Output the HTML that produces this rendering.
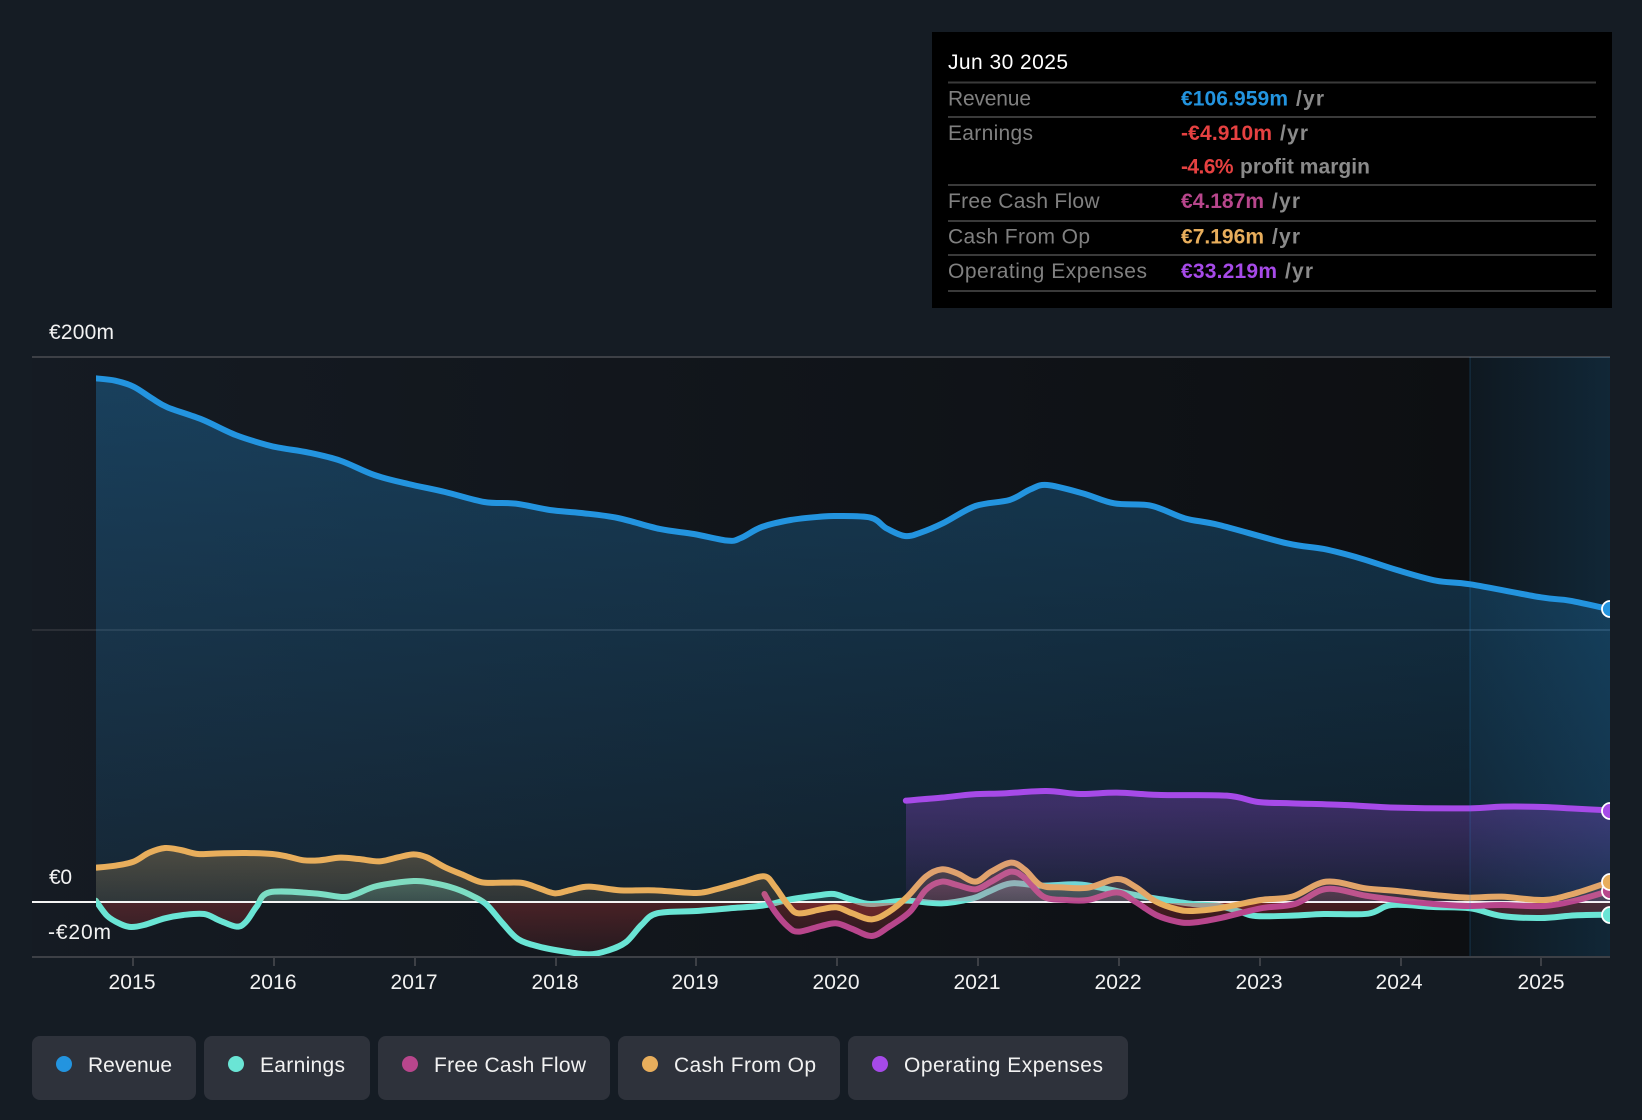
<!DOCTYPE html>
<html lang="en">
<head>
<meta charset="utf-8">
<title>Revenue and earnings chart</title>
<style>
html,body{margin:0;padding:0;background:#151c24;width:1642px;height:1120px;overflow:hidden}
svg{display:block}
text{font-family:"Liberation Sans",Arial,sans-serif;font-size:21px;fill:#f2f2f2}
.l{fill:#808080}
.b{font-weight:bold}
.g{fill:#8a8a8a;font-weight:bold}
.ln{fill:none;stroke-linecap:round;stroke-linejoin:round;vector-effect:non-scaling-stroke}
</style>
</head>
<body>
<svg id="chart" width="1642" height="1120" viewBox="0 0 1642 1120" xmlns="http://www.w3.org/2000/svg">
<defs>
<linearGradient id="bg" gradientUnits="userSpaceOnUse" x1="32" y1="0" x2="1470" y2="0"><stop offset="0" stop-color="#151b23"/><stop offset="1" stop-color="#0d0f12"/></linearGradient>
<linearGradient id="band" gradientUnits="userSpaceOnUse" x1="1470" y1="0" x2="1610" y2="0"><stop offset="0" stop-color="#2394df" stop-opacity=".07"/><stop offset="1" stop-color="#2394df" stop-opacity=".18"/></linearGradient>
<linearGradient id="rev" gradientUnits="userSpaceOnUse" x1="0" y1="375" x2="0" y2="902"><stop offset="0" stop-color="#2394df" stop-opacity=".31"/><stop offset="1" stop-color="#2394df" stop-opacity=".1"/></linearGradient>
<linearGradient id="org" gradientUnits="userSpaceOnUse" x1="0" y1="845" x2="0" y2="902"><stop offset="0" stop-color="#e8ae5c" stop-opacity=".27"/><stop offset="1" stop-color="#e8ae5c" stop-opacity=".12"/></linearGradient>
<linearGradient id="tea" gradientUnits="userSpaceOnUse" x1="0" y1="870" x2="0" y2="902"><stop offset="0" stop-color="#6ae5d5" stop-opacity=".3"/><stop offset="1" stop-color="#6ae5d5" stop-opacity=".15"/></linearGradient>
<linearGradient id="pnk" gradientUnits="userSpaceOnUse" x1="0" y1="860" x2="0" y2="902"><stop offset="0" stop-color="#b8468c" stop-opacity=".3"/><stop offset="1" stop-color="#b8468c" stop-opacity=".15"/></linearGradient>
<linearGradient id="red" gradientUnits="userSpaceOnUse" x1="0" y1="902" x2="0" y2="957"><stop offset="0" stop-color="#e64141" stop-opacity=".26"/><stop offset="1" stop-color="#e64141" stop-opacity=".08"/></linearGradient>
<linearGradient id="opx" gradientUnits="userSpaceOnUse" x1="0" y1="805" x2="0" y2="902"><stop offset="0" stop-color="#a64ae8" stop-opacity=".28"/><stop offset="1" stop-color="#a64ae8" stop-opacity=".06"/></linearGradient>
<clipPath id="plot"><rect x="96" y="340" width="1514" height="620"/></clipPath>
<clipPath id="cRev"><polygon transform="translate(0,310) scale(.5236,.33333)" points="183,1776 183,205 220,212 255,230 290,265 320,292 385,328 450,375 510,405 540,415 590,428 650,452 715,495 780,522 850,546 925,576 985,581 1050,600 1110,609 1180,624 1260,657 1325,672 1390,692 1415,684 1455,651 1510,630 1568,620 1598,618 1663,623 1693,655 1728,678 1758,668 1803,638 1863,588 1928,570 1968,538 2000,525 2068,550 2128,580 2198,587 2263,625 2328,645 2458,700 2528,717 2598,745 2668,780 2743,812 2808,823 2943,862 2998,872 3075,898 3075,1776"/></clipPath>
<clipPath id="cEar"><polygon transform="translate(0,780) scale(.5236,.33333)" points="183,367 183,362 205,408 230,432 250,441 275,435 315,415 350,405 390,402 420,422 452,440 470,425 490,380 515,337 600,340 655,351 680,342 720,318 790,303 830,310 870,326 905,350 930,375 960,430 990,478 1030,500 1080,515 1125,523 1160,512 1195,487 1225,435 1255,400 1330,393 1400,384 1460,376 1510,358 1568,345 1593,342 1623,357 1663,372 1728,362 1798,370 1858,355 1888,335 1931,310 1988,317 2058,313 2108,325 2168,345 2218,358 2278,372 2328,378 2368,395 2398,408 2468,407 2528,402 2613,401 2658,375 2738,381 2808,385 2868,408 2943,414 3008,406 3075,404 3075,367"/></clipPath>
<clipPath id="cFcf"><polygon transform="translate(0,780) scale(.5236,.33333)" points="1460,367 1460,342 1480,395 1505,440 1525,455 1568,438 1598,430 1628,447 1665,468 1698,440 1738,395 1768,330 1798,305 1828,315 1863,328 1893,305 1931,275 1958,295 1993,350 2038,360 2078,360 2133,337 2168,365 2208,405 2248,425 2278,428 2328,415 2408,385 2473,372 2533,327 2608,347 2668,360 2738,372 2803,378 2868,375 2948,378 3008,362 3075,332 3075,367"/></clipPath>
<clipPath id="cCash"><polygon transform="translate(0,780) scale(.5236,.33333)" points="183,367 183,263 220,257 255,245 285,218 315,204 345,210 378,222 420,220 470,219 520,222 550,230 580,241 610,241 650,233 685,237 725,244 760,232 790,223 815,232 850,262 885,285 920,307 960,308 998,309 1030,325 1060,340 1090,330 1125,320 1185,331 1250,331 1330,339 1370,327 1420,305 1460,289 1480,320 1505,375 1525,400 1568,388 1598,382 1628,400 1665,418 1698,395 1733,350 1768,290 1798,268 1828,280 1863,305 1893,275 1931,248 1958,270 1988,316 2028,322 2078,323 2133,297 2168,320 2208,365 2248,388 2278,393 2328,385 2408,360 2468,350 2533,305 2608,325 2668,333 2738,345 2803,353 2868,350 2948,360 3008,340 3075,305 3075,367"/></clipPath>
<clipPath id="cOpx"><polygon transform="translate(0,780) scale(.5236,.33333)" points="1730,367 1730,62 1798,53 1858,43 1918,40 1998,33 2063,42 2133,38 2218,45 2343,47 2403,66 2468,70 2568,75 2668,83 2808,85 2868,80 2948,81 3008,86 3075,91 3075,367"/></clipPath>
</defs>

<rect width="1642" height="1120" fill="#151c24"/>
<rect x="32" y="357" width="1578" height="600" fill="url(#bg)"/>

<!-- grid -->
<rect x="32" y="356" width="1578" height="2" fill="#3d4046"/>
<rect x="32" y="629" width="1578" height="2" fill="#2b2f36"/>

<!-- revenue fill -->
<rect x="96" y="360" width="1514" height="542" fill="url(#rev)" clip-path="url(#cRev)"/>
<!-- forecast band -->
<rect x="1470" y="357" width="140" height="600" fill="url(#band)"/>

<g clip-path="url(#plot)">
<polyline transform="translate(0,310) scale(.5236,.33333)" class="ln" stroke="#2394df" stroke-width="6" points="183,205 220,212 255,230 290,265 320,292 385,328 450,375 510,405 540,415 590,428 650,452 715,495 780,522 850,546 925,576 985,581 1050,600 1110,609 1180,624 1260,657 1325,672 1390,692 1415,684 1455,651 1510,630 1568,620 1598,618 1663,623 1693,655 1728,678 1758,668 1803,638 1863,588 1928,570 1968,538 2000,525 2068,550 2128,580 2198,587 2263,625 2328,645 2458,700 2528,717 2598,745 2668,780 2743,812 2808,823 2943,862 2998,872 3075,898"/>

<rect x="32" y="901" width="1578" height="2" fill="#f4f4f4"/>

<!-- earnings -->
<rect x="96" y="700" width="1514" height="201" fill="url(#tea)" clip-path="url(#cEar)"/>
<rect x="96" y="903" width="1514" height="54" fill="url(#red)" clip-path="url(#cEar)"/>
<polyline transform="translate(0,780) scale(.5236,.33333)" class="ln" stroke="#6ae5d5" stroke-width="6" points="183,362 205,408 230,432 250,441 275,435 315,415 350,405 390,402 420,422 452,440 470,425 490,380 515,337 600,340 655,351 680,342 720,318 790,303 830,310 870,326 905,350 930,375 960,430 990,478 1030,500 1080,515 1125,523 1160,512 1195,487 1225,435 1255,400 1330,393 1400,384 1460,376 1510,358 1568,345 1593,342 1623,357 1663,372 1728,362 1798,370 1858,355 1888,335 1931,310 1988,317 2058,313 2108,325 2168,345 2218,358 2278,372 2328,378 2368,395 2398,408 2468,407 2528,402 2613,401 2658,375 2738,381 2808,385 2868,408 2943,414 3008,406 3075,404"/>

<!-- free cash flow -->
<rect x="96" y="700" width="1514" height="201" fill="url(#pnk)" clip-path="url(#cFcf)"/>
<rect x="96" y="903" width="1514" height="54" fill="url(#red)" clip-path="url(#cFcf)"/>
<polyline transform="translate(0,780) scale(.5236,.33333)" class="ln" stroke="#b8468c" stroke-width="6" points="1460,342 1480,395 1505,440 1525,455 1568,438 1598,430 1628,447 1665,468 1698,440 1738,395 1768,330 1798,305 1828,315 1863,328 1893,305 1931,275 1958,295 1993,350 2038,360 2078,360 2133,337 2168,365 2208,405 2248,425 2278,428 2328,415 2408,385 2473,372 2533,327 2608,347 2668,360 2738,372 2803,378 2868,375 2948,378 3008,362 3075,332"/>

<!-- cash from op -->
<rect x="96" y="700" width="1514" height="201" fill="url(#org)" clip-path="url(#cCash)"/>
<rect x="96" y="903" width="1514" height="54" fill="url(#red)" clip-path="url(#cCash)"/>
<polyline transform="translate(0,780) scale(.5236,.33333)" class="ln" stroke="#e8ae5c" stroke-width="6" points="183,263 220,257 255,245 285,218 315,204 345,210 378,222 420,220 470,219 520,222 550,230 580,241 610,241 650,233 685,237 725,244 760,232 790,223 815,232 850,262 885,285 920,307 960,308 998,309 1030,325 1060,340 1090,330 1125,320 1185,331 1250,331 1330,339 1370,327 1420,305 1460,289 1480,320 1505,375 1525,400 1568,388 1598,382 1628,400 1665,418 1698,395 1733,350 1768,290 1798,268 1828,280 1863,305 1893,275 1931,248 1958,270 1988,316 2028,322 2078,323 2133,297 2168,320 2208,365 2248,388 2278,393 2328,385 2408,360 2468,350 2533,305 2608,325 2668,333 2738,345 2803,353 2868,350 2948,360 3008,340 3075,305"/>

<!-- operating expenses -->
<rect x="906" y="790" width="704" height="112" fill="url(#opx)" clip-path="url(#cOpx)"/>
<polyline transform="translate(0,780) scale(.5236,.33333)" class="ln" stroke="#a64ae8" stroke-width="6" points="1730,62 1798,53 1858,43 1918,40 1998,33 2063,42 2133,38 2218,45 2343,47 2403,66 2468,70 2568,75 2668,83 2808,85 2868,80 2948,81 3008,86 3075,91"/>

<rect x="1469" y="357" width="2" height="600" fill="#2394df" fill-opacity=".13"/>

<!-- end markers -->
<g stroke="#fff" stroke-width="1.8">
<circle cx="1610" cy="609" r="8" fill="#2394df"/>
<circle cx="1610" cy="811" r="8" fill="#a64ae8"/>
<circle cx="1610" cy="891" r="8" fill="#b8468c"/>
<circle cx="1610" cy="882" r="8" fill="#e8ae5c"/>
<circle cx="1610" cy="915" r="8" fill="#6ae5d5"/>
</g>
</g>

<!-- left part of zero line -->
<rect x="32" y="901" width="64" height="2" fill="#f4f4f4"/>

<!-- axis -->
<rect x="32" y="956" width="1578" height="2" fill="#3d4046"/>
<g fill="#3d4046">
<rect x="132" y="958" width="2" height="8"/><rect x="273" y="958" width="2" height="8"/><rect x="414" y="958" width="2" height="8"/><rect x="555" y="958" width="2" height="8"/><rect x="695" y="958" width="2" height="8"/><rect x="836" y="958" width="2" height="8"/><rect x="977" y="958" width="2" height="8"/><rect x="1118" y="958" width="2" height="8"/><rect x="1259" y="958" width="2" height="8"/><rect x="1400" y="958" width="2" height="8"/><rect x="1540" y="958" width="2" height="8"/>
</g>

<!-- y labels -->
<text x="49" y="339" textLength="65">€200m</text>
<text x="49" y="884" textLength="23">€0</text>
<text x="48" y="939" textLength="63">-€20m</text>

<!-- x labels -->
<g text-anchor="middle">
<text x="132" y="989" textLength="47">2015</text>
<text x="273" y="989" textLength="47">2016</text>
<text x="414" y="989" textLength="47">2017</text>
<text x="555" y="989" textLength="47">2018</text>
<text x="695" y="989" textLength="47">2019</text>
<text x="836" y="989" textLength="47">2020</text>
<text x="977" y="989" textLength="47">2021</text>
<text x="1118" y="989" textLength="47">2022</text>
<text x="1259" y="989" textLength="47">2023</text>
<text x="1399" y="989" textLength="47">2024</text>
<text x="1541" y="989" textLength="47">2025</text>
</g>

<!-- tooltip -->
<rect x="932" y="32" width="680" height="276" fill="#000"/>
<g fill="#3a3a3a">
<rect x="948" y="81.500" width="648" height="2"/>
<rect x="948" y="116" width="648" height="2"/>
<rect x="948" y="184" width="648" height="2"/>
<rect x="948" y="220" width="648" height="2"/>
<rect x="948" y="254" width="648" height="2"/>
<rect x="948" y="290" width="648" height="2"/>
</g>
<text x="948" y="69" textLength="120" style="fill:#fff">Jun 30 2025</text>

<text class="l" x="948" y="105.500" textLength="83">Revenue</text>
<text class="b" x="1181" y="105.500" textLength="107" style="fill:#2394df">€106.959m</text>
<text class="g" x="1296" y="105.500" textLength="28">/yr</text>

<text class="l" x="948" y="140" textLength="85">Earnings</text>
<text class="b" x="1181" y="140" textLength="91" style="fill:#e64141">-€4.910m</text>
<text class="g" x="1280" y="140" textLength="28">/yr</text>

<text class="b" x="1181" y="173.500" textLength="52.500" style="fill:#e64141">-4.6%</text>
<text class="g" x="1240" y="173.500" textLength="130">profit margin</text>

<text class="l" x="948" y="208" textLength="151.500">Free Cash Flow</text>
<text class="b" x="1181" y="208" textLength="83" style="fill:#b8468c">€4.187m</text>
<text class="g" x="1272" y="208" textLength="28">/yr</text>

<text class="l" x="948" y="243.500" textLength="142">Cash From Op</text>
<text class="b" x="1181" y="243.500" textLength="83" style="fill:#e8ae5c">€7.196m</text>
<text class="g" x="1272" y="243.500" textLength="28">/yr</text>

<text class="l" x="948" y="278" textLength="199">Operating Expenses</text>
<text class="b" x="1181" y="278" textLength="96" style="fill:#a64ae8">€33.219m</text>
<text class="g" x="1285" y="278" textLength="28">/yr</text>

<!-- legend -->
<g fill="#2e323b">
<rect x="32" y="1036" width="164" height="64" rx="8"/>
<rect x="204" y="1036" width="166" height="64" rx="8"/>
<rect x="378" y="1036" width="232" height="64" rx="8"/>
<rect x="618" y="1036" width="222" height="64" rx="8"/>
<rect x="848" y="1036" width="280" height="64" rx="8"/>
</g>
<circle cx="64" cy="1064" r="8" fill="#2394df"/>
<circle cx="236" cy="1064" r="8" fill="#6ae5d5"/>
<circle cx="410" cy="1064" r="8" fill="#b8468c"/>
<circle cx="650" cy="1064" r="8" fill="#e8ae5c"/>
<circle cx="880" cy="1064" r="8" fill="#a64ae8"/>
<text x="88" y="1072" textLength="84">Revenue</text>
<text x="260" y="1072" textLength="85">Earnings</text>
<text x="434" y="1072" textLength="152">Free Cash Flow</text>
<text x="674" y="1072" textLength="142">Cash From Op</text>
<text x="904" y="1072" textLength="199">Operating Expenses</text>
</svg>
<script>
(function(){
  var NS='http://www.w3.org/2000/svg';
  function pts(el){
    return el.getAttribute('points').trim().split(/\s+/).map(function(s){
      var a=s.split(',');return [parseFloat(a[0]),parseFloat(a[1])];
    });
  }
  function curve(p){
    var d='';
    for(var i=0;i<p.length-1;i++){
      var p0=p[Math.max(i-1,0)],p1=p[i],p2=p[i+1],p3=p[Math.min(i+2,p.length-1)];
      d+=' C'+(p1[0]+(p2[0]-p0[0])/6)+' '+(p1[1]+(p2[1]-p0[1])/6)+' '+
          (p2[0]-(p3[0]-p1[0])/6)+' '+(p2[1]-(p3[1]-p1[1])/6)+' '+p2[0]+' '+p2[1];
    }
    return d;
  }
  function swap(el,d){
    var n=document.createElementNS(NS,'path');
    for(var i=0;i<el.attributes.length;i++){
      var at=el.attributes[i];
      if(at.name!=='points')n.setAttribute(at.name,at.value);
    }
    n.setAttribute('d',d);
    el.parentNode.replaceChild(n,el);
  }
  var svg=document.getElementById('chart');
  Array.prototype.slice.call(svg.querySelectorAll('polyline')).forEach(function(el){
    var p=pts(el);
    swap(el,'M'+p[0][0]+' '+p[0][1]+curve(p));
  });
  Array.prototype.slice.call(svg.querySelectorAll('polygon')).forEach(function(el){
    var p=pts(el),inner=p.slice(1,-1),last=p[p.length-1];
    swap(el,'M'+p[0][0]+' '+p[0][1]+' L'+inner[0][0]+' '+inner[0][1]+curve(inner)+' L'+last[0]+' '+last[1]+' Z');
  });
})();
</script>
</body>
</html>
